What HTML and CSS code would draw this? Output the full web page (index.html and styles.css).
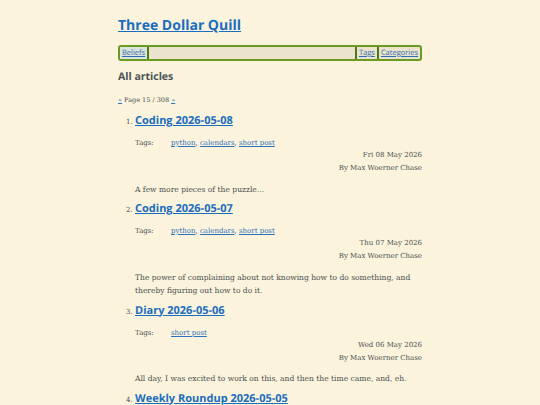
FILE: index.html
```html
<!DOCTYPE html>
<html lang="en">
<head>
<meta charset="utf-8">
<title>Three Dollar Quill</title>
<link rel="stylesheet" href="styles.css">
</head>
<body>
<div class="page">
  <header class="site-header">
    <h1 class="site-title"><a href="#">Three Dollar Quill</a></h1>
    <nav class="nav">
      <a class="nav-link nav-active" href="#">Beliefs</a>
      <span class="nav-spacer"></span>
      <a class="nav-link nav-sep" href="#">Tags</a>
      <a class="nav-link nav-sep" href="#">Categories</a>
    </nav>
  </header>
  <main>
    <h2 class="section-title">All articles</h2>
    <p class="pager"><a href="#">«</a> Page 15 / 308 <a href="#">»</a></p>
    <ol class="articles">
      <li class="article">
        <h3 class="article-title"><a href="#">Coding 2026-05-08</a></h3>
        <div class="tags"><span class="tags-label">Tags:</span><span><a href="#">python</a>, <a href="#">calendars</a>, <a href="#">short post</a></span></div>
        <div class="meta"><div>Fri 08 May 2026</div><div>By Max Woerner Chase</div></div>
        <p class="summary">A few more pieces of the puzzle...</p>
      </li>
      <li class="article">
        <h3 class="article-title"><a href="#">Coding 2026-05-07</a></h3>
        <div class="tags"><span class="tags-label">Tags:</span><span><a href="#">python</a>, <a href="#">calendars</a>, <a href="#">short post</a></span></div>
        <div class="meta"><div>Thu 07 May 2026</div><div>By Max Woerner Chase</div></div>
        <p class="summary">The power of complaining about not knowing how to do something, and thereby figuring out how to do it.</p>
      </li>
      <li class="article">
        <h3 class="article-title"><a href="#">Diary 2026-05-06</a></h3>
        <div class="tags"><span class="tags-label">Tags:</span><span><a href="#">short post</a></span></div>
        <div class="meta"><div>Wed 06 May 2026</div><div>By Max Woerner Chase</div></div>
        <p class="summary">All day, I was excited to work on this, and then the time came, and, eh.</p>
      </li>
      <li class="article">
        <h3 class="article-title"><a href="#">Weekly Roundup 2026-05-05</a></h3>
        <div class="tags"><span class="tags-label">Tags:</span><span><a href="#">short post</a></span></div>
        <div class="meta"><div>Tue 05 May 2026</div><div>By Max Woerner Chase</div></div>
        <p class="summary">A summary of the week.</p>
      </li>
    </ol>
  </main>
</div>
</body>
</html>
```
FILE: styles.css
```css
html, body {
  margin: 0;
  padding: 0;
  background: #fbf3dc;
}
body {
  font-family: "DejaVu Serif", serif;
  color: #4a4f52;
  font-size: 8px;
  text-rendering: geometricPrecision;
}
a {
  color: #2a72bb;
}
.page {
  width: 304px;
  margin: 0 auto;
  padding-top: 16px;
}
.site-title {
  font-family: "Open Sans", "Noto Sans", sans-serif;
  font-size: 14px;
  font-weight: 700;
  margin: 0 0 9px 0;
  line-height: 20px;
}
.site-title a {
  color: #1a6dbf;
}
.nav {
  display: flex;
  align-items: stretch;
  border: 2px solid #6a9a22;
  border-radius: 3px;
  background: #ebe3cd;
  height: 12px;
  font-family: "Open Sans", "Noto Sans", sans-serif;
  font-size: 7.5px;
  line-height: 12px;
}
.nav-link {
  padding: 0 2px;
  color: #2a6db0;
}
.nav-active {
  background: #dde3dc;
  border-right: 2px solid #4d7a14;
}
.nav-spacer {
  flex: 1;
}
.nav-sep {
  border-left: 2px solid #4d7a14;
}
.section-title {
  font-family: "Open Sans", "Noto Sans", sans-serif;
  font-size: 10.5px;
  font-weight: 700;
  color: #4a5356;
  margin: 8px 0 10px 0;
  line-height: 16px;
}
.pager {
  margin: 0 0 8px 0;
  font-size: 6.5px;
  line-height: 10px;
}
.articles {
  margin: 0;
  padding-left: 17px;
}
.article {
  font-size: 7px;
}
.article-title {
  font-family: "Open Sans", "Noto Sans", sans-serif;
  font-size: 11px;
  font-weight: 700;
  margin: 0 0 9px 0;
  line-height: 16px;
}
.article-title a {
  color: #1a6dbf;
}
.tags {
  display: flex;
  font-size: 7px;
  line-height: 11px;
}
.tags-label {
  width: 36px;
}
.meta {
  text-align: right;
  font-size: 7px;
  line-height: 13px;
}
.summary {
  font-size: 7.55px;
  line-height: 13.5px;
  margin: 7.5px 0 5px 0;
}
```
